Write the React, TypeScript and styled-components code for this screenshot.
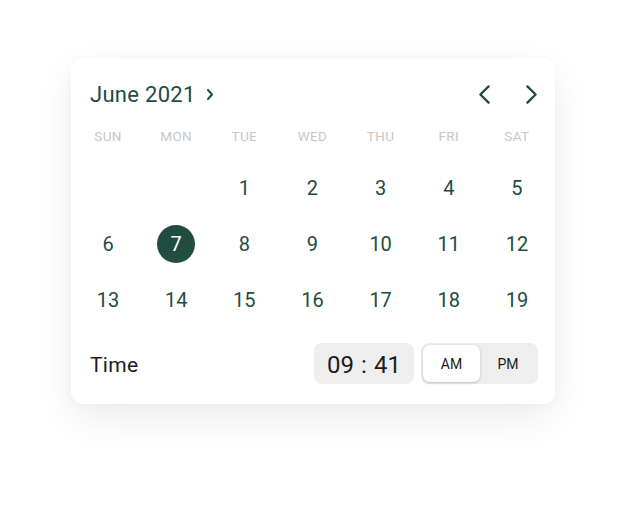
import * as React from 'react';
import styled, { createGlobalStyle } from 'styled-components';

const GREEN = '#234c41';

const GlobalStyle = createGlobalStyle`
    html, body {
        margin: 0;
        background: #ffffff;
        font-family: Roboto, "Liberation Sans", sans-serif;
    }
`;

const Page = styled.div`
    min-height: 522px;
    box-sizing: border-box;
    padding: 58px 0 0 71px;
`;

const Card = styled.div`
    width: 484px;
    height: 346px;
    box-sizing: border-box;
    padding: 18px 17px 20px 19px;
    background: #fff;
    border-radius: 12px;
    box-shadow: 0 14px 44px rgba(0, 0, 0, 0.08), 0 2px 8px rgba(0, 0, 0, 0.03);
    display: flex;
    flex-direction: column;
`;

const Header = styled.div`
    height: 36px;
    display: flex;
    align-items: center;
    justify-content: space-between;
`;

const MonthButton = styled.div`
    display: flex;
    align-items: center;
    gap: 10px;
    font-size: 22px;
    font-weight: 400;
    color: ${GREEN};
    letter-spacing: 0.3px;
`;

const Nav = styled.div`
    display: flex;
    align-items: center;
    gap: 34px;
`;

const Grid = styled.div`
    margin: 14px -13px 0 -16px;
    display: grid;
    grid-template-columns: repeat(7, 1fr);
`;

const WeekDay = styled.div`
    height: 20px;
    display: flex;
    align-items: center;
    justify-content: center;
    font-size: 13.5px;
    color: #c8c8c8;
    letter-spacing: 0.4px;
    margin-bottom: 14px;
`;

const DayCell = styled.div`
    height: 56px;
    display: flex;
    align-items: center;
    justify-content: center;
`;

const Day = styled.div<{ $selected?: boolean }>`
    width: 38px;
    height: 38px;
    border-radius: 50%;
    display: flex;
    align-items: center;
    justify-content: center;
    font-size: 20px;
    color: ${(p) => (p.$selected ? '#fff' : GREEN)};
    background: ${(p) => (p.$selected ? GREEN : 'transparent')};
`;

const TimeRow = styled.div`
    margin-top: 15px;
    height: 41px;
    display: flex;
    align-items: center;
`;

const TimeLabel = styled.div`
    flex: 1;
    padding-top: 3px;
    font-size: 21px;
    color: #1c1c1c;
    letter-spacing: 0.3px;
`;

const TimeBox = styled.div`
    width: 100px;
    height: 41px;
    border-radius: 8px;
    background: #eeeeee;
    display: flex;
    align-items: center;
    justify-content: center;
    padding-top: 3px;
    box-sizing: border-box;
    font-size: 24px;
    color: #1c1c1c;
    gap: 7px;
`;

const Segment = styled.div`
    margin-left: 7px;
    width: 117px;
    height: 41px;
    box-sizing: border-box;
    padding: 2px;
    border-radius: 8px;
    background: #eeeeee;
    display: flex;
`;

const SegmentItem = styled.div<{ $active?: boolean }>`
    flex: ${(p) => (p.$active ? '0 0 57px' : '1')};
    border-radius: 7px;
    display: flex;
    align-items: center;
    justify-content: center;
    font-size: 14px;
    color: #1c1c1c;
    background: ${(p) => (p.$active ? '#fff' : 'transparent')};
    box-shadow: ${(p) => (p.$active ? '0 1px 3px rgba(0,0,0,0.2)' : 'none')};
`;

const Chevron = ({ dir, w, h, sw }: { dir: 'left' | 'right'; w: number; h: number; sw: number }) => (
    <svg width={w} height={h} viewBox={`0 0 ${w} ${h}`} fill="none">
        <path
            d={dir === 'right'
                ? `M${sw} ${sw} L${w - sw} ${h / 2} L${sw} ${h - sw}`
                : `M${w - sw} ${sw} L${sw} ${h / 2} L${w - sw} ${h - sw}`}
            stroke={GREEN}
            strokeWidth={sw}
            strokeLinecap="round"
            strokeLinejoin="round"
        />
    </svg>
);

const weekDays = ['SUN', 'MON', 'TUE', 'WED', 'THU', 'FRI', 'SAT'];
const days: (number | null)[] = [null, null, 1, 2, 3, 4, 5, 6, 7, 8, 9, 10, 11, 12, 13, 14, 15, 16, 17, 18, 19];

export default function App() {
    return (
        <Page>
            <GlobalStyle />
            <Card>
                <Header>
                    <MonthButton>
                        June 2021
                        <Chevron dir="right" w={8} h={13} sw={2} />
                    </MonthButton>
                    <Nav>
                        <Chevron dir="left" w={13} h={21} sw={2.4} />
                        <Chevron dir="right" w={13} h={21} sw={2.4} />
                    </Nav>
                </Header>
                <Grid>
                    {weekDays.map((d) => (
                        <WeekDay key={d}>{d}</WeekDay>
                    ))}
                    {days.map((d, i) => (
                        <DayCell key={i}>
                            {d !== null && <Day $selected={d === 7}>{d}</Day>}
                        </DayCell>
                    ))}
                </Grid>
                <TimeRow>
                    <TimeLabel>Time</TimeLabel>
                    <TimeBox>
                        <span>09</span>
                        <span>:</span>
                        <span>41</span>
                    </TimeBox>
                    <Segment>
                        <SegmentItem $active>AM</SegmentItem>
                        <SegmentItem>PM</SegmentItem>
                    </Segment>
                </TimeRow>
            </Card>
        </Page>
    );
}
